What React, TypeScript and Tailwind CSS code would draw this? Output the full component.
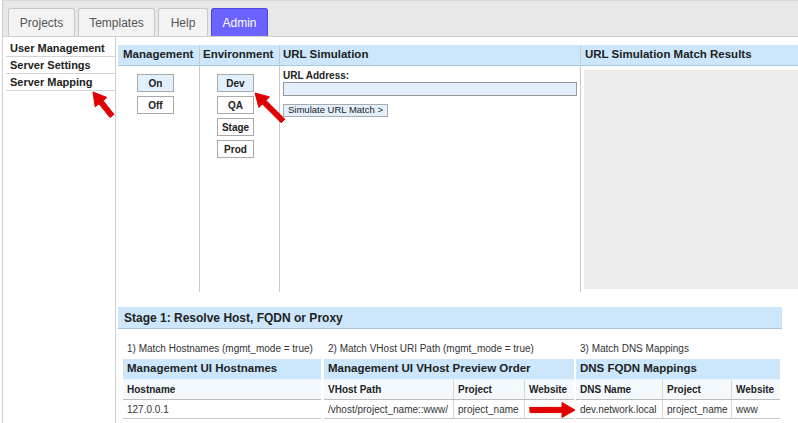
import React from "react";

type Cell = { label: string; w: number };

const tabs = [
  { name: "Projects", w: 67 },
  { name: "Templates", w: 77 },
  { name: "Help", w: 50 },
  { name: "Admin", w: 57, active: true },
];

const sideItems = ["User Management", "Server Settings", "Server Mapping"];

function Tab({ name, w, active }: { name: string; w: number; active?: boolean }) {
  return (
    <div
      style={{ width: w }}
      className={
        active
          ? "h-[28px] flex items-center justify-center rounded-t-[3px] border border-b-0 border-[#4f43e6] bg-[#6b63ff] text-white text-[12px]"
          : "h-[28px] flex items-center justify-center rounded-t-[3px] border border-b-0 border-[#c9c9c9] bg-[#f3f3f3] text-[#555] text-[12px]"
      }
    >
      {name}
    </div>
  );
}

function EnvButton({ label, on }: { label: string; on?: boolean }) {
  return (
    <div
      className={
        "w-[37px] h-[18px] flex items-center justify-center border border-[#a9a9a9] text-[10px] font-bold text-[#222] " +
        (on ? "bg-[#e2effc]" : "bg-white")
      }
    >
      {label}
    </div>
  );
}

function ColHead({ title, className }: { title: string; className?: string }) {
  return (
    <div
      className={
        "h-[21px] flex items-center bg-[#cce6fb] border-b border-[#a9c7df] text-[11.5px] font-bold text-[#222] whitespace-nowrap " +
        (className ?? "pl-[4px]")
      }
    >
      {title}
    </div>
  );
}

function MapTable({
  label,
  title,
  width,
  cols,
  row,
}: {
  label: string;
  title: string;
  width: number;
  cols: Cell[];
  row: string[];
}) {
  return (
    <div style={{ width }} className="flex flex-col">
      <div className="h-[12px] leading-[12px] mb-[4px] pl-[4px] text-[10px] text-[#333] whitespace-nowrap">
        {label}
      </div>
      <div className="h-[21px] flex items-center pl-[4px] bg-[#cce6fb] border-b border-[#e8f2fb] text-[11.5px] font-bold text-[#222] whitespace-nowrap">
        {title}
      </div>
      <div className="flex h-[20px] bg-[#f4f9fe] border-b border-[#bdbdbd]">
        {cols.map((c, i) => (
          <div
            key={c.label}
            style={{ width: c.w }}
            className={
              "flex items-center pl-[4px] text-[10px] font-bold text-[#222] whitespace-nowrap " +
              (i < cols.length - 1 ? "border-r border-[#d6d6d6]" : "")
            }
          >
            {c.label}
          </div>
        ))}
      </div>
      <div className="flex h-[19px] border-b border-[#c8c8c8]">
        {cols.map((c, i) => (
          <div
            key={c.label}
            style={{ width: c.w }}
            className={
              "flex items-center pl-[4px] text-[10px] text-[#333] whitespace-nowrap overflow-hidden " +
              (i < cols.length - 1 ? "border-r border-[#d6d6d6]" : "")
            }
          >
            {row[i]}
          </div>
        ))}
      </div>
    </div>
  );
}

// red annotation arrows drawn over the screenshot
function arrowPoints(x1: number, y1: number, x2: number, y2: number) {
  const L = Math.hypot(x2 - x1, y2 - y1);
  const a = Math.atan2(y2 - y1, x2 - x1);
  const w = 2.6;
  const h = 13;
  const hw = 7.5;
  const pts = [
    [0, -w],
    [L - h, -w],
    [L - h, -hw],
    [L, 0],
    [L - h, hw],
    [L - h, w],
    [0, w],
  ];
  return pts
    .map(([px, py]) => {
      const x = x1 + px * Math.cos(a) - py * Math.sin(a);
      const y = y1 + px * Math.sin(a) + py * Math.cos(a);
      return `${x.toFixed(1)},${y.toFixed(1)}`;
    })
    .join(" ");
}

function Arrows() {
  return (
    <svg
      className="absolute inset-0 pointer-events-none"
      width={798}
      height={423}
      viewBox="0 0 798 423"
    >
      <polygon points={arrowPoints(112, 116, 93, 92)} fill="#e10000" strokeLinejoin="round" stroke="#e10000" strokeWidth={1} />
      <polygon points={arrowPoints(283, 121, 255, 93)} fill="#e10000" strokeLinejoin="round" stroke="#e10000" strokeWidth={1} />
      <polygon points={arrowPoints(530, 410, 575, 410)} fill="#e10000" strokeLinejoin="round" stroke="#e10000" strokeWidth={1} />
    </svg>
  );
}

export default function App() {
  return (
    <div className="relative w-[798px] h-[423px] overflow-hidden bg-white font-['Liberation_Sans',Arial,sans-serif] text-[#222]">
      <div className="ml-[2px] h-full border-l border-[#cfcfcf] flex flex-col">
        {/* ******** Tab bar */}
        <div className="h-[37px] shrink-0 bg-[#e8e8e8] border-t border-[#d9d9d9] border-b border-b-[#d2d2d2] flex items-end gap-[3px] pl-[5px]">
          {tabs.map((t) => (
            <Tab key={t.name} {...t} />
          ))}
        </div>

        <div className="flex flex-1">
          {/* ******** Sidebar */}
          <div className="w-[113px] shrink-0 border-r border-[#cfcfcf] pt-[3px]">
            {sideItems.map((s) => (
              <div
                key={s}
                className="ml-[3px] h-[17px] flex items-center pl-[4px] border-b border-[#d4d4d4] text-[11px] font-bold text-[#222] whitespace-nowrap"
              >
                {s}
              </div>
            ))}
          </div>

          {/* ******** Main */}
          <div className="flex-1 pl-[2px] pt-[8px]">
            <div className="flex h-[247px]">
              <div className="w-[82px] border-r border-[#c9c9c9]">
                <ColHead title="Management" className="pl-[5px]" />
                <div className="flex flex-col gap-[4px] pt-[8px] pl-[19px]">
                  <EnvButton label="On" on />
                  <EnvButton label="Off" />
                </div>
              </div>
              <div className="w-[80px] border-r border-[#c9c9c9]">
                <ColHead title="Environment" className="pl-[3px]" />
                <div className="flex flex-col gap-[4px] pt-[8px] pl-[17px]">
                  <EnvButton label="Dev" on />
                  <EnvButton label="QA" />
                  <EnvButton label="Stage" />
                  <EnvButton label="Prod" />
                </div>
              </div>
              <div className="w-[301px] border-r border-[#c9c9c9]">
                <ColHead title="URL Simulation" className="pl-[3px]" />
                <div className="pl-[3px] pt-[4px]">
                  <div className="h-[12px] leading-[12px] text-[10px] font-bold text-[#222]">URL Address:</div>
                  <div className="w-[294px] h-[14px] border border-[#9a9a9a] bg-[#e3f0fc]" />
                  <div className="mt-[2px] inline-flex h-[13px] items-center px-[4px] border border-[#ababab] bg-[#e3f0fc] text-[9.5px] text-[#222] whitespace-nowrap">
                    Simulate URL Match &gt;
                  </div>
                </div>
              </div>
              <div className="flex-1">
                <ColHead title="URL Simulation Match Results" />
                <div className="pl-[3px] pt-[4px]">
                  <div className="h-[219px] bg-[#ececec]" />
                </div>
              </div>
            </div>

            {/* ******** Stage 1 */}
            <div className="mt-[15px] w-[664px] h-[22px] flex items-center pl-[6px] bg-[#cce6fb] border-b border-[#a9c7df] text-[12px] font-bold text-[#222]">
              Stage 1: Resolve Host, FQDN or Proxy
            </div>

            <div className="flex mt-[14px] pl-[5px]">
              <MapTable
                label="1) Match Hostnames (mgmt_mode = true)"
                title="Management UI Hostnames"
                width={198}
                cols={[{ label: "Hostname", w: 198 }]}
                row={["127.0.0.1"]}
              />
              <div className="w-[3px]" />
              <MapTable
                label="2) Match VHost URI Path (mgmt_mode = true)"
                title="Management UI VHost Preview Order"
                width={250}
                cols={[
                  { label: "VHost Path", w: 130 },
                  { label: "Project", w: 71 },
                  { label: "Website", w: 49 },
                ]}
                row={["/vhost/project_name::www/", "project_name", "www"]}
              />
              <div className="w-[2px]" />
              <MapTable
                label="3) Match DNS Mappings"
                title="DNS FQDN Mappings"
                width={204}
                cols={[
                  { label: "DNS Name", w: 87 },
                  { label: "Project", w: 69 },
                  { label: "Website", w: 48 },
                ]}
                row={["dev.network.local", "project_name", "www"]}
              />
            </div>
          </div>
        </div>
      </div>
      <Arrows />
    </div>
  );
}
